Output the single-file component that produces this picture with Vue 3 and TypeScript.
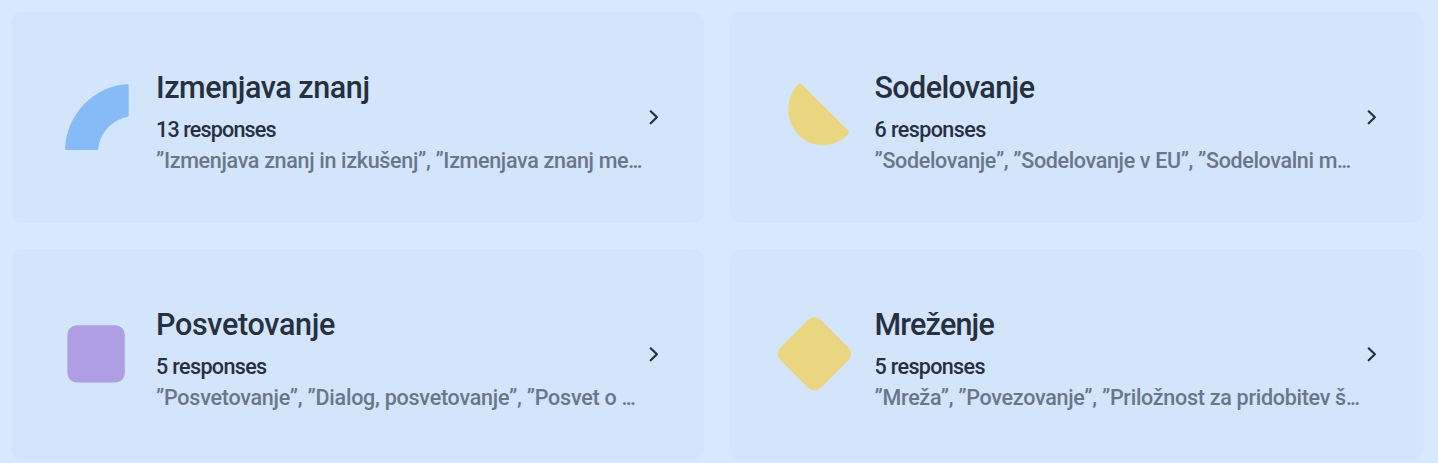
<script setup lang="ts">
interface Spacing { title: number; count: number; quotes: number }
interface Group {
  title: string
  count: string
  quotes: string
  shape: 'arc' | 'half' | 'square' | 'diamond'
  color: string
  spacing: Spacing
}

const groups: Group[] = [
  {
    title: 'Izmenjava znanj', count: '13 responses',
    quotes: '”Izmenjava znanj in izkušenj”, ”Izmenjava znanj me',
    shape: 'arc', color: '#86bbf8',
    spacing: { title: -0.43, count: -0.83, quotes: -0.32 },
  },
  {
    title: 'Sodelovanje', count: '6 responses',
    quotes: '”Sodelovanje”, ”Sodelovanje v EU”, ”Sodelovalni m',
    shape: 'half', color: '#ead580',
    spacing: { title: -0.6, count: -0.57, quotes: -0.34 },
  },
  {
    title: 'Posvetovanje', count: '5 responses',
    quotes: '”Posvetovanje”, ”Dialog, posvetovanje”, ”Posvet o ',
    shape: 'square', color: '#af9ee4',
    spacing: { title: -0.3, count: -0.63, quotes: -0.24 },
  },
  {
    title: 'Mreženje', count: '5 responses',
    quotes: '”Mreža”, ”Povezovanje”, ”Priložnost za pridobitev š',
    shape: 'diamond', color: '#ead580',
    spacing: { title: -0.8, count: -0.65, quotes: -0.28 },
  },
]

const px = (n: number) => ({ letterSpacing: `${n}px` })
</script>

<template>
  <main class="board">
    <article v-for="g in groups" :key="g.title" class="card">
      <svg class="shape" viewBox="0 0 80 80" :fill="g.color">
        <path v-if="g.shape === 'arc'" d="M14.1 74.8C15.5 40 43 12 76.5 10.3Q77.7 10.3 77.7 11.5V41.3Q77.7 42.4 76.5 42.7C60.5 46.5 48.8 58.5 47.4 75Q47.2 76.1 46.2 76.1H15.3Q14.1 76.1 14.1 74.8Z" />
        <path v-else-if="g.shape === 'half'" d="M28.2 10.1Q29.7 8.3 31.4 10L78.2 56.6Q80 58.4 78.2 60.2C64.5 74.5 42.5 74.8 29.3 61.5C15.2 47.5 14.5 25.5 28.2 10.1Z" />
        <rect v-else-if="g.shape === 'square'" x="16.4" y="14.2" width="57.4" height="57.4" rx="9.5" />
        <rect v-else x="16" y="14.4" width="57" height="57" rx="9" transform="rotate(45 44.5 42.9)" />
      </svg>
      <div class="text">
        <h2 class="title"><span :style="px(g.spacing.title)">{{ g.title }}</span></h2>
        <p class="count"><span :style="px(g.spacing.count)">{{ g.count }}</span></p>
        <p class="quotes"><span :style="px(g.spacing.quotes)">{{ g.quotes }}</span><span class="dots">...</span></p>
      </div>
      <svg class="chevron" viewBox="0 0 12 18">
        <path d="M2.7 2.3L8.9 8.3L2.7 14.3" fill="none" stroke="#263040" stroke-width="2.2" stroke-linecap="round" stroke-linejoin="round" />
      </svg>
    </article>
  </main>
</template>

<style>
body {
  background: #d5eaff;
  overflow: hidden;
}
</style>

<style scoped>
.board {
  display: grid;
  grid-template-columns: 693px 693px;
  grid-auto-rows: 210.5px;
  gap: 26.5px 25.5px;
  height: 463px;
  padding: 12px 0 0 11px;
  box-sizing: border-box;
  overflow: hidden;
  font-family: Roboto, "Liberation Sans", sans-serif;
  color: #263040;
}
.card {
  display: flex;
  align-items: flex-start;
  box-sizing: border-box;
  padding: 62px 44.5px 0 40px;
  border-radius: 11px;
  background: #d3e5fa;
}
.shape {
  flex: none;
  width: 80px;
  height: 80px;
  overflow: visible;
}
.text {
  flex: 1;
  min-width: 0;
  padding-left: 25px;
}
h2,
p {
  margin: 0;
  white-space: pre;
}
.title {
  font-size: 30.5px;
  line-height: 27px;
  font-weight: 500;
}
.count {
  margin-top: 14px;
  font-size: 21.5px;
  line-height: 30px;
  font-weight: 500;
}
.quotes {
  font-size: 21.5px;
  line-height: 31px;
  font-weight: 500;
  color: #697789;
}
.dots {
  letter-spacing: -1.8px;
}
.chevron {
  flex: none;
  width: 12px;
  height: 18px;
  margin-top: 35px;
}
</style>
